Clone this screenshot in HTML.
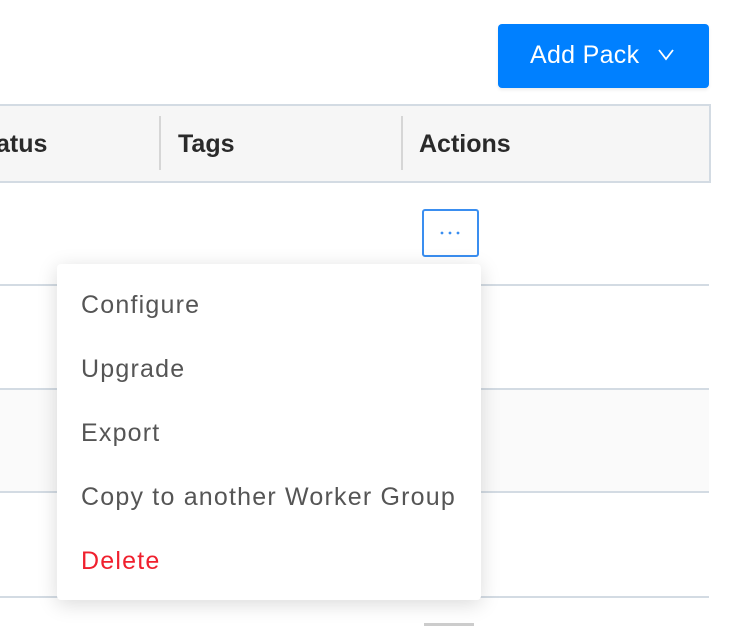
<!DOCTYPE html>
<html><head><style>
body{margin:0;width:746px;height:626px;background:#fff;position:relative;overflow:hidden;font-family:"Liberation Sans",sans-serif}
.abs{position:absolute}
.btn{left:498px;top:24px;width:211px;height:64px;background:#0080ff;border-radius:4px;color:#fff;font-size:25px;box-shadow:0 2px 3px rgba(0,0,0,.08)}
.hdr{left:-2px;top:104px;width:709px;height:75px;background:#f6f6f6;border:2px solid #d3dbe3}
.th{top:130px;font-size:25px;font-weight:bold;color:#2a2a2a}
.sep{top:116px;width:2px;height:54px;background:#d6d6d6}
.line{left:0;width:709px;height:2px;background:#d3dbe3}
.menu{left:57px;top:264px;width:424px;height:336px;background:#fff;border-radius:4px;box-shadow:0 4px 20px rgba(0,0,0,.15)}
.mi{left:24px;font-size:25px;letter-spacing:1.2px;color:#555}
</style></head><body>
<div class="abs btn"><span class="abs" style="left:32px;top:17px;letter-spacing:.3px">Add Pack</span>
<svg class="abs" style="left:160px;top:24px" width="16" height="14"><path d="M1 2 L8 11 L15 2" fill="none" stroke="#fff" stroke-width="1.8"/></svg></div>
<div class="abs hdr"></div>
<div class="abs th" style="left:-29px">Status</div>
<div class="abs sep" style="left:159px"></div>
<div class="abs th" style="left:178px">Tags</div>
<div class="abs sep" style="left:401px"></div>
<div class="abs th" style="left:419px">Actions</div>
<div class="abs" style="left:0;top:389px;width:709px;height:103px;background:#fafafa"></div>
<div class="abs line" style="top:284px"></div>
<div class="abs line" style="top:388px"></div>
<div class="abs line" style="top:491px"></div>
<div class="abs line" style="top:596px"></div>
<div class="abs" style="left:422px;top:209px;width:53px;height:44px;border:2px solid #3a8ef0;border-radius:3px"></div>
<svg class="abs" style="left:440px;top:230px" width="20" height="6"><circle cx="2" cy="3" r="1.4" fill="#3a8ef0"/><circle cx="10" cy="3" r="1.4" fill="#3a8ef0"/><circle cx="18" cy="3" r="1.4" fill="#3a8ef0"/></svg>
<div class="abs" style="left:424px;top:623px;width:50px;height:3px;background:#ccc"></div>
<div class="abs menu">
<div class="abs mi" style="top:27px">Configure</div>
<div class="abs mi" style="top:91px">Upgrade</div>
<div class="abs mi" style="top:155px">Export</div>
<div class="abs mi" style="top:219px">Copy to another Worker Group</div>
<div class="abs mi" style="top:283px;color:#f0202e">Delete</div>
</div>
</body></html>
